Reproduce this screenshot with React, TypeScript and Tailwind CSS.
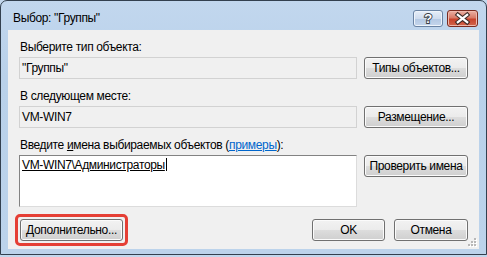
import React from "react";

const btn =
  "flex items-center justify-center whitespace-nowrap h-[22px] rounded-[3px] border border-[#707070] bg-[linear-gradient(to_bottom,#f2f2f2_0%,#ebebeb_50%,#dddddd_51%,#cfcfcf_100%)] shadow-[inset_0_0_0_1px_#fbfbfb] text-[12px] leading-none text-black";

function GripDots() {
  const pts = [
    [6, 0],
    [3, 3],
    [6, 3],
    [0, 6],
    [3, 6],
    [6, 6],
  ];
  return (
    <svg width="9" height="9" viewBox="0 0 9 9" className="absolute right-[2px] bottom-[2px]">
      {pts.map(([x, y], i) => (
        <g key={i}>
          <rect x={x + 1} y={y + 1} width="2" height="2" fill="#ffffff" />
          <rect x={x} y={y} width="2" height="2" fill="#b8b8b8" />
        </g>
      ))}
    </svg>
  );
}

export default function App() {
  return (
    <div className="w-[487px] h-[257px] bg-[#c3d7ed] overflow-hidden font-['Liberation_Sans',Arial,sans-serif] tracking-[-0.35px]">
      <div className="w-[487px] h-[255px] border border-[#33404f] rounded-t-[7px] bg-[linear-gradient(to_bottom,#c2d7ee_0%,#b9d1ea_30%,#bcd3eb_100%)] flex flex-col">
        {/* Title bar */}
        <div className="h-[29px] flex items-start relative">
          <div className="pl-[12px] pt-[10px] text-[12px] leading-[14px] text-black">Выбор: "Группы"</div>
          <div className="ml-auto mr-[8px] mt-[9px] flex gap-[4px]">
            <div className="w-[30px] h-[17px] rounded-[3px] border border-[#6a83a3] bg-[linear-gradient(to_bottom,#e6eef8_0%,#cfdcee_50%,#b3c8e3_51%,#c5d6ec_100%)] shadow-[inset_0_0_0_1px_#eef4fb] flex items-center justify-center">
              <svg width="30" height="17" viewBox="0 0 30 17">
                <text
                  x="15"
                  y="13.5"
                  textAnchor="middle"
                  fontSize="14"
                  fontWeight="bold"
                  fontFamily="Liberation Sans, sans-serif"
                  fill="#ffffff"
                  stroke="#3a3f47"
                  strokeWidth="2"
                  paintOrder="stroke"
                >
                  ?
                </text>
              </svg>
            </div>
            <div className="w-[31px] h-[17px] rounded-[3px] border border-[#7a2b20] bg-[linear-gradient(to_bottom,#eab0a4_0%,#d97b68_45%,#c8432c_55%,#d1654c_100%)] shadow-[inset_0_0_0_1px_#efb9ad] flex items-center justify-center">
              <svg width="31" height="17" viewBox="0 0 31 17">
                <path d="M10.5 4.5 L20.5 12.5 M20.5 4.5 L10.5 12.5" stroke="#3b2a27" strokeWidth="4.6" strokeLinecap="square" />
                <path d="M10.5 4.5 L20.5 12.5 M20.5 4.5 L10.5 12.5" stroke="#ffffff" strokeWidth="2.4" strokeLinecap="square" />
              </svg>
            </div>
          </div>
        </div>
        {/* Frame + client */}
        <div className="flex flex-1 px-[7px] pb-[5px]">
          <div className="relative w-[471px] h-[219px] bg-[#f0f0f0] pl-[11px] pr-[11px] pt-[10px] flex flex-col text-[12px] text-black">
            <div className="leading-[14px] h-[14px] pl-[1px]">Выберите тип объекта:</div>
            <div className="mt-[3px] flex items-start gap-[7px]">
              <div className="w-[338px] h-[22px] border border-[#d2d2d2] bg-[#f0f0f0] flex items-center pl-[2px] leading-none">
                "Группы"
              </div>
              <button className={`${btn} w-[104px]`}>Типы объектов...</button>
            </div>
            <div className="mt-[10px] leading-[14px] h-[14px] pl-[1px]">В следующем месте:</div>
            <div className="mt-[3px] flex items-start gap-[7px]">
              <div className="w-[338px] h-[22px] border border-[#d2d2d2] bg-[#f0f0f0] flex items-center pl-[2px] leading-none">
                VM-WIN7
              </div>
              <button className={`${btn} w-[104px]`}>Размещение...</button>
            </div>
            <div className="mt-[10px] leading-[14px] h-[14px] pl-[1px]">
              Введите <span className="underline">и</span>мена выбираемых объектов (
              <span className="text-[#0066cc] underline">примеры</span>):
            </div>
            <div className="mt-[3px] flex items-start gap-[7px]">
              <div className="w-[338px] h-[52px] border border-t-[#828282] border-l-[#828282] border-r-[#dcdcdc] border-b-[#dcdcdc] bg-white pl-[2px] pt-[2px] leading-[14px]">
                <span className="underline">VM-WIN7\Администраторы</span>
                <span className="inline-block w-px h-[13px] bg-black align-[-2px] ml-[1px]" />
              </div>
              <button className={`${btn} w-[104px]`}>Проверить имена</button>
            </div>
            <div className="mt-[7px] flex items-start">
              <div className="-ml-[4px] border-[3px] border-[#e53f35] rounded-[5px] px-[2px] py-[2px]">
                <button className={`${btn} w-[103px] h-[21px]`}>Дополнительно...</button>
              </div>
              <button className={`${btn} ml-auto mt-[5px] w-[73px] border-[#3c7fb1] shadow-[inset_0_0_0_1px_#9fe3f9]`}>OK</button>
              <button className={`${btn} ml-[9px] mt-[5px] w-[74px]`}>Отмена</button>
            </div>
            <GripDots />
          </div>
        </div>
      </div>
    </div>
  );
}
